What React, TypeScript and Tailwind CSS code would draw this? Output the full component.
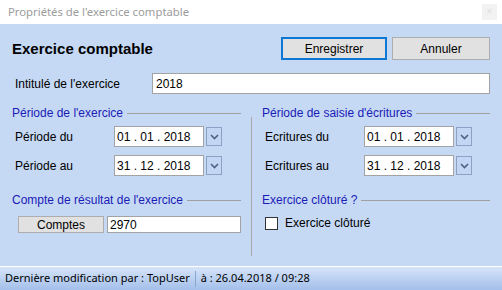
import React from "react";

const FONT = "font-['Liberation_Sans',Arial,sans-serif]";

function GroupHeader({ text }: { text: string }) {
  return (
    <div className="flex items-center h-[14px]">
      <span className="text-[12px] text-[#1b1bb5] whitespace-nowrap leading-none">{text}</span>
      <div className="flex-1 h-px bg-[#a0a0a0] ml-[4px]" />
    </div>
  );
}

function Chevron() {
  return (
    <svg width="9" height="6" viewBox="0 0 9 6">
      <path d="M1 1 L4.5 4.5 L8 1" fill="none" stroke="#4d6185" strokeWidth="1.6" />
    </svg>
  );
}

function DateRow({ label, value }: { label: string; value: string }) {
  return (
    <div className="flex items-center h-[21px]">
      <span className="w-[102px] pl-[3px] text-[12px] text-black leading-none">{label}</span>
      <div className="w-[90px] h-[21px] bg-white border border-[#a3a3a3] flex items-center pl-[2px] text-[12px] leading-none">
        {value}
      </div>
      <div className="ml-[2px] w-[16px] h-[19px] border border-[#8da1c4] bg-[#c3d6f4] flex items-center justify-center">
        <Chevron />
      </div>
    </div>
  );
}

export default function App() {
  return (
    <div className={`w-[502px] h-[290px] flex flex-col overflow-hidden ${FONT}`}>
      <div className="h-[24px] shrink-0 bg-white flex items-center justify-between pl-[8px] pr-[5px]">
        <span className="text-[11.3px] text-[#9c9c9c] font-['Noto_Sans',sans-serif] leading-none">
          Propriétés de l'exercice comptable
        </span>
        <div className="w-[15px] h-[16px] bg-[#f2f2f2] flex items-center justify-center text-[8px] text-[#e0e0e0]">
          ✕
        </div>
      </div>
      <div className="h-[242px] shrink-0 bg-[#c5d9f5] px-[12px] flex flex-col">
        <div className="flex items-center justify-between mt-[13px] h-[23px]">
          <span className="text-[15px] font-bold text-black leading-none">Exercice comptable</span>
          <div className="flex gap-[5px]">
            <button className="w-[106px] h-[23px] bg-[#e1e1e1] border-2 border-[#0d78d4] text-[12px] leading-none text-black">
              Enregistrer
            </button>
            <button className="w-[98px] h-[23px] bg-[#e1e1e1] border border-[#adadad] text-[12px] leading-none text-black">
              Annuler
            </button>
          </div>
        </div>
        <div className="flex items-center mt-[13px] h-[21px]">
          <span className="w-[140px] pl-[3px] text-[12px] leading-none">Intitulé de l'exercice</span>
          <div className="flex-1 h-[21px] bg-white border border-[#a3a3a3] flex items-center pl-[3px] text-[12px] leading-none">
            2018
          </div>
        </div>
        <div className="flex mt-[12px]">
          <div className="w-[229px] flex flex-col">
            <GroupHeader text="Période de l'exercice" />
            <div className="mt-[6px] flex flex-col gap-[8px]">
              <DateRow label="Période du" value="01 . 01 . 2018" />
              <DateRow label="Période au" value="31 . 12 . 2018" />
            </div>
            <div className="mt-[17px]">
              <GroupHeader text="Compte de résultat de l'exercice" />
            </div>
            <div className="flex items-center mt-[9px] pl-[6px] h-[17px]">
              <button className="w-[86px] h-[17px] bg-[#e1e1e1] border border-[#adadad] text-[12px] leading-none">
                Comptes
              </button>
              <div className="ml-[3px] flex-1 h-[17px] bg-white border border-[#a3a3a3] flex items-center pl-[2px] text-[12px] leading-none">
                2970
              </div>
            </div>
          </div>
          <div className="ml-[10px] w-px mt-[11px] h-[139px] bg-[#a8a8a8]" />
          <div className="ml-[10px] flex-1 flex flex-col">
            <GroupHeader text="Période de saisie d'écritures" />
            <div className="mt-[6px] flex flex-col gap-[8px]">
              <DateRow label="Ecritures du" value="01 . 01 . 2018" />
              <DateRow label="Ecritures au" value="31 . 12 . 2018" />
            </div>
            <div className="mt-[17px]">
              <GroupHeader text="Exercice clôturé ?" />
            </div>
            <div className="flex items-center mt-[9px] pl-[3px] h-[14px]">
              <div className="w-[13px] h-[13px] bg-white border border-[#333]" />
              <span className="ml-[7px] text-[12px] leading-none">Exercice clôturé</span>
            </div>
          </div>
        </div>
      </div>
      <div className="flex-1 border-t border-white bg-gradient-to-b from-[#d6e4f8] to-[#a3bfea] flex items-center pl-[5px] font-['Noto_Sans',sans-serif] text-[11px] text-black">
        <span>Dernière modification par : TopUser</span>
        <div className="mx-[5px] w-px h-[16px] bg-[#8aa6cf]" />
        <span>à : 26.04.2018 / 09:28</span>
      </div>
    </div>
  );
}
